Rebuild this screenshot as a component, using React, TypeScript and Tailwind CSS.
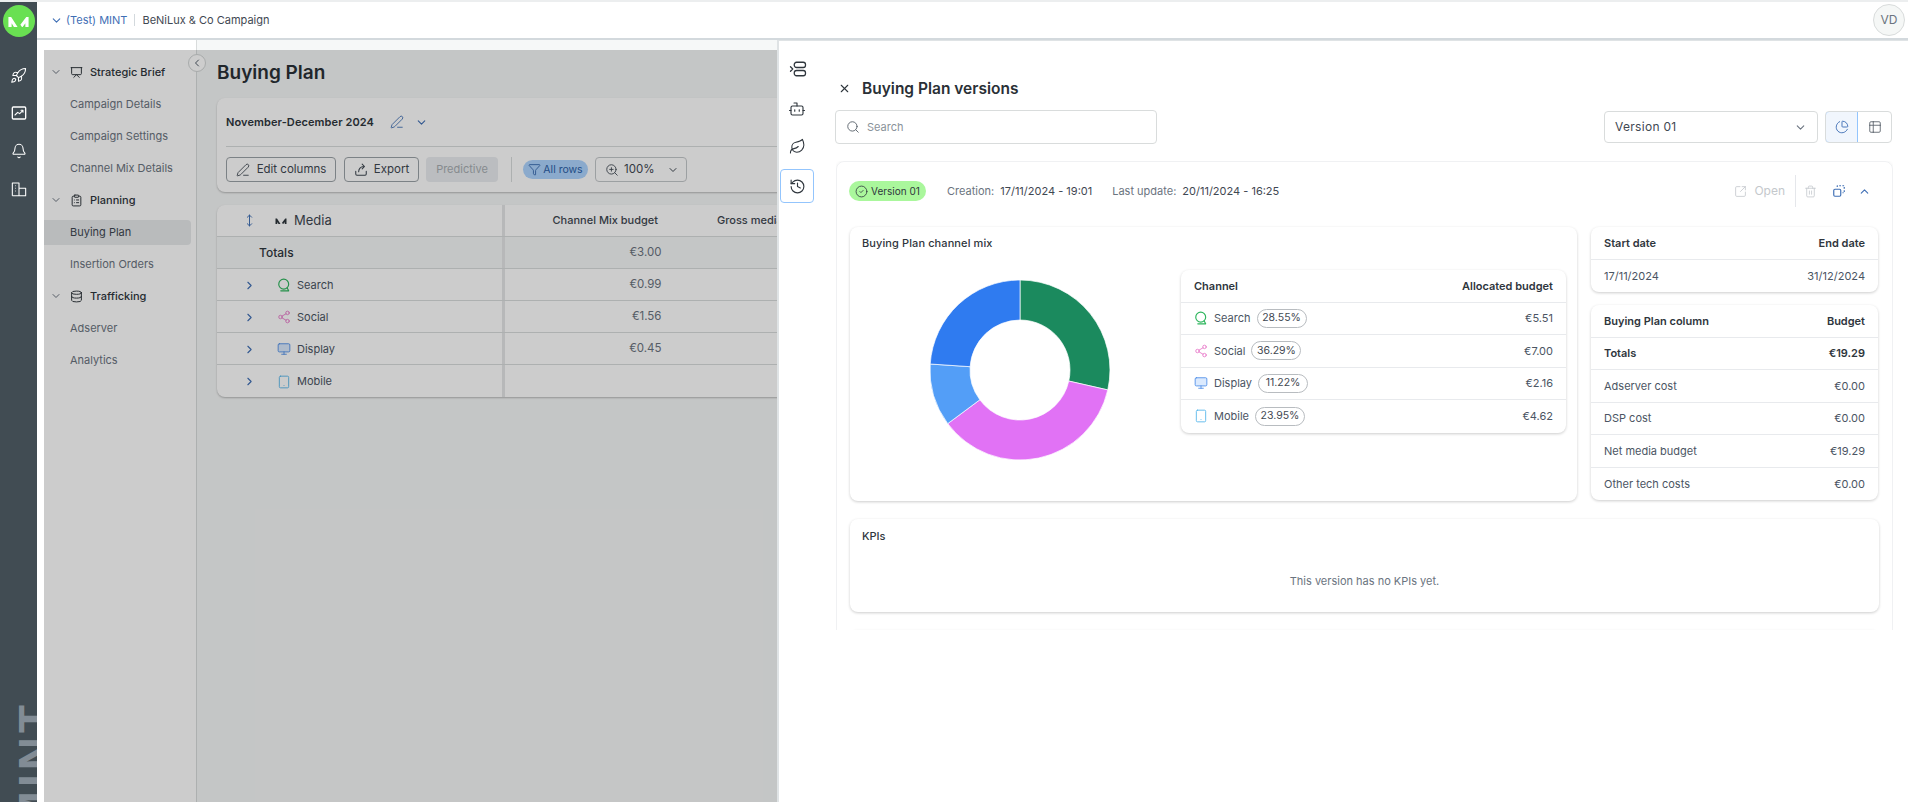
import React from 'react';
import {
  Rocket, Bell, ChevronDown, ChevronLeft, ChevronRight, ChevronUp, Presentation, ClipboardList,
  Database, Share2, Monitor, Tablet, Funnel, ZoomIn, PenLine, Bot, Leaf, History, X, Search, CircleCheck,
  PieChart, Table2, SquareArrowOutUpRight, Trash2, MoveVertical,
} from 'lucide-react';

const MLogo = ({ className }: { className: string }) => (
  <svg viewBox="0 0 24 12" className={className} fill="currentColor">
    <path d="M1 12V1h3l7 11H7L4.5 8v4zM23 12V1h-2.5L14 9.5l1.8 2.5h.7l3-4v4z" />
  </svg>
);

const SearchTail = ({ className }: { className: string }) => (
  <svg viewBox="0 0 24 24" className={className} fill="none" stroke="currentColor" strokeWidth="2" strokeLinecap="round">
    <circle cx="11.5" cy="10.5" r="8.5" />
    <path d="M17.5 17 20 22M6.5 22H20" />
  </svg>
);

const StatsBox = ({ className }: { className: string }) => (
  <svg viewBox="0 0 24 24" className={className} fill="none" stroke="currentColor" strokeWidth="2" strokeLinejoin="round" strokeLinecap="round">
    <rect x="2" y="3" width="20" height="18" rx="1.5" />
    <path d="m6 15 4-4 3 2 5-5M15 8h3v3" strokeWidth="1.6" />
  </svg>
);

const Buildings = ({ className }: { className: string }) => (
  <svg viewBox="0 0 24 24" className={className} fill="none" stroke="currentColor" strokeWidth="1.6" strokeLinejoin="round">
    <path d="M2 22V3h10v19M12 11h10v11H2" />
    <path d="M6 7h1M6 11h1M6 15h1" />
  </svg>
);

const ExportIcon = ({ className }: { className: string }) => (
  <svg viewBox="0 0 24 24" className={className} fill="none" stroke="currentColor" strokeWidth="1.8" strokeLinecap="round" strokeLinejoin="round">
    <path d="M3 14v5a2 2 0 0 0 2 2h14a2 2 0 0 0 2-2v-5" />
    <path d="M8 15c0-5 3-9 9-9M14 2l4 4-4 4" />
  </svg>
);

const RowsIcon = ({ className }: { className: string }) => (
  <svg viewBox="0 0 24 24" className={className} fill="none" stroke="currentColor" strokeWidth="1.7" strokeLinecap="round" strokeLinejoin="round">
    <rect x="7" y="3" width="15" height="7" rx="3" />
    <rect x="7" y="14" width="15" height="7" rx="3" />
    <path d="m2 9 3 3-3 3" />
  </svg>
);

const CopyDashed = ({ className }: { className: string }) => (
  <svg viewBox="0 0 24 24" className={className} fill="none" stroke="currentColor" strokeWidth="2" strokeLinejoin="round">
    <rect x="3" y="9" width="12" height="12" rx="2" />
    <path d="M9 5V3h12v12h-3" strokeDasharray="3 2.4" />
  </svg>
);

const channelIcons: Record<string, React.ReactNode> = {
  Search: <SearchTail className="w-[14px] h-[14px] text-[#2fb65e]" />,
  Social: <Share2 className="w-[14px] h-[14px] text-[#e879c9]" strokeWidth={1.5} />,
  Display: <Monitor className="w-[14px] h-[14px] text-[#4f8fe8] fill-[#dbeafe]" strokeWidth={1.5} />,
  Mobile: <Tablet className="w-[14px] h-[14px] text-[#55b6ea]" strokeWidth={1.5} />,
};

const mediaRows = [
  { name: 'Search', budget: '€0.99' },
  { name: 'Social', budget: '€1.56' },
  { name: 'Display', budget: '€0.45' },
  { name: 'Mobile', budget: '' },
];

const mix = [
  { name: 'Search', pct: 28.55, amount: '€5.51', color: '#1b8a5e' },
  { name: 'Social', pct: 36.29, amount: '€7.00', color: '#e172f5' },
  { name: 'Display', pct: 11.22, amount: '€2.16', color: '#539ef7' },
  { name: 'Mobile', pct: 23.95, amount: '€4.62', color: '#2f7bf0' },
];

const columns = [
  { name: 'Adserver cost', value: '€0.00' },
  { name: 'DSP cost', value: '€0.00' },
  { name: 'Net media budget', value: '€19.29' },
  { name: 'Other tech costs', value: '€0.00' },
];

const arc = (start: number, end: number) => {
  const pt = (r: number, p: number) => {
    const a = (p / 100) * 2 * Math.PI;
    return `${100 + r * Math.sin(a)} ${100 - r * Math.cos(a)}`;
  };
  const large = end - start > 50 ? 1 : 0;
  return `M${pt(90, start)}A90 90 0 ${large} 1 ${pt(90, end)}L${pt(50, end)}A50 50 0 ${large} 0 ${pt(50, start)}Z`;
};

const Donut = () => {
  let acc = 0;
  return (
    <svg viewBox="0 0 200 200" className="w-[200px] h-[200px]">
      {mix.map((m) => {
        const d = arc(acc, acc + m.pct);
        acc += m.pct;
        return <path key={m.name} d={d} fill={m.color} stroke="#ffffff" strokeWidth="0.7" />;
      })}
    </svg>
  );
};

const SubItem = ({ label, active }: { label: string; active?: boolean }) => (
  <div className="h-[32px] flex items-center">
    <div className={`w-full h-[25px] pl-[26px] flex items-center text-[11px] rounded-r ${active ? 'bg-[#e8eaec] text-[#3f4852]' : 'text-[#6b7480]'}`}>
      {label}
    </div>
  </div>
);

const Section = ({ icon, label }: { icon: React.ReactNode; label: string }) => (
  <div className="h-[32px] flex items-center text-[11px] font-medium text-[#2f363d]">
    <ChevronDown className="w-[12px] h-[12px] ml-[6px] mr-[7px] text-[#6b7480]" />
    <span className="w-[14px] flex justify-center">{icon}</span>
    <span className="ml-[7px]">{label}</span>
  </div>
);

const Cell = ({ left, right, bold, header }: { left: React.ReactNode; right: React.ReactNode; bold?: boolean; header?: boolean }) => (
  <div className={`h-[32.5px] px-[13px] flex items-center justify-between text-[11px] border-b border-[#e8eaed] last:border-b-0 ${bold || header ? 'font-semibold text-[#2f363d]' : 'text-[#4b5563]'}`}>
    <div className="flex items-center">{left}</div>
    <div>{right}</div>
  </div>
);

export default function App() {
  return (
    <div className="w-[1908px] h-[802px] overflow-hidden flex pt-[2px] bg-[#eceeef] font-['Inter',sans-serif]">
      {/* left rail */}
      <div className="w-[37px] shrink-0 bg-[#414c53] text-white flex flex-col items-center overflow-hidden pt-[3px]">
        <div className="w-[32px] h-[32px] rounded-full bg-[#69e052] flex items-center justify-center">
          <MLogo className="w-[23px] h-[11px] text-white" />
        </div>
        <Rocket className="w-[17px] h-[17px] mt-[30px]" strokeWidth={1.5} />
        <StatsBox className="w-[16px] h-[16px] mt-[21px]" />
        <Bell className="w-[16px] h-[16px] mt-[22px]" strokeWidth={1.6} />
        <Buildings className="w-[16px] h-[16px] mt-[22px]" />
        <div className="mt-auto -mb-[27px] self-start ml-[12px] [writing-mode:vertical-rl] rotate-180 text-[46px] leading-[46px] font-extrabold text-[#828c95] tracking-[4px] font-['Liberation_Sans',sans-serif]">
          MINT
        </div>
      </div>

      <div className="flex-1 flex flex-col bg-white min-w-0">
        {/* header */}
        <div className="h-[38px] shrink-0 border-b-2 border-[#d3d9dd] rounded-tl flex items-center pl-[13px] pr-[3px] text-[11px]">
          <ChevronDown className="w-[13px] h-[13px] text-[#3f6fb5] mr-[3px]" />
          <span className="text-[#3f6fb5]">(Test) MINT</span>
          <span className="w-px h-[12px] bg-[#d3d9dd] mx-[7px]" />
          <span className="text-[#3f4852]">BeNiLux &amp; Co Campaign</span>
          <div className="ml-auto w-[32px] h-[32px] rounded-full border border-[#d9dcdc] bg-[#f5f7f6] flex items-center justify-center text-[12px] text-[#6b7480]">
            VD
          </div>
        </div>

        <div className="relative flex-1 flex min-h-0">
          {/* sidebar */}
          <div className="w-[160px] shrink-0 border-r border-[#d9dcdc] pt-[16px] pl-[7px] pr-[5px] bg-white">
            <Section icon={<Presentation className="w-[13px] h-[13px]" strokeWidth={1.8} />} label="Strategic Brief" />
            <SubItem label="Campaign Details" />
            <SubItem label="Campaign Settings" />
            <SubItem label="Channel Mix Details" />
            <Section icon={<ClipboardList className="w-[13px] h-[13px]" strokeWidth={1.8} />} label="Planning" />
            <SubItem label="Buying Plan" active />
            <SubItem label="Insertion Orders" />
            <Section icon={<Database className="w-[13px] h-[13px]" strokeWidth={1.8} />} label="Trafficking" />
            <SubItem label="Adserver" />
            <SubItem label="Analytics" />
          </div>

          {/* main */}
          <div className="flex-1 min-w-0 bg-[#f6f8f8] pl-[20px] pt-[21px] overflow-hidden">
            <h1 className="text-[19px] leading-[24px] font-semibold text-[#2a3036]">Buying Plan</h1>
            <div className="w-[1200px] mt-[13px] h-[94px] bg-white rounded-lg shadow-[0_1px_2px_rgba(0,0,0,0.25)] pl-[9px]">
              <div className="h-[49px] flex items-center border-b border-[#d9dcdc] text-[11px] tracking-[0.1px] font-semibold text-[#2f363d]">
                November-December 2024
                <PenLine className="w-[14px] h-[14px] text-[#3f6fb5] ml-[16px]" strokeWidth={1.5} />
                <ChevronDown className="w-[13px] h-[13px] text-[#3f6fb5] ml-[11px]" />
              </div>
              <div className="flex items-center mt-[10px] text-[11.5px] text-[#3f4852]">
                <button className="w-[110px] h-[25px] border border-[#9ca3a8] rounded flex items-center justify-center gap-[7px]">
                  <PenLine className="w-[14px] h-[14px]" strokeWidth={1.5} /> Edit columns
                </button>
                <button className="ml-[8px] w-[75px] h-[25px] border border-[#9ca3a8] rounded flex items-center justify-center gap-[6px]">
                  <ExportIcon className="w-[14px] h-[14px]" /> Export
                </button>
                <button className="ml-[7px] w-[72px] h-[25px] bg-[#eaedf0] rounded text-[11px] text-[#a8adb3]">Predictive</button>
                <span className="w-px h-[25px] bg-[#d9dcdc] ml-[13px]" />
                <span className="ml-[11px] w-[65px] h-[19px] rounded-full bg-[#aed5ff] text-[#2c5fa8] text-[10.5px] flex items-center justify-center gap-[2px]">
                  <Funnel className="w-[13px] h-[13px]" strokeWidth={1.5} /> All rows
                </span>
                <div className="ml-[7px] w-[92px] h-[25px] border border-[#c4c8cb] rounded flex items-center pl-[9px]">
                  <ZoomIn className="w-[14px] h-[14px]" strokeWidth={1.5} />
                  <span className="ml-[5px]">100%</span>
                  <ChevronDown className="w-[12px] h-[12px] ml-[13px]" />
                </div>
              </div>
            </div>

            <div className="w-[1200px] mt-[13px] bg-white rounded-lg shadow-[0_1px_2px_rgba(0,0,0,0.25)] text-[11px]">
              <div className="h-[32px] flex items-center border-b border-[#d9dcdc]">
                <div className="w-[288px] h-full flex items-center border-r-[3px] border-[#e5e7e8] pl-[26px]">
                  <MoveVertical className="w-[13px] h-[13px] text-[#3f6fb5]" strokeWidth={1.8} />
                  <MLogo className="w-[12px] h-[6px] text-[#2f363d] ml-[19px]" />
                  <span className="ml-[7px] text-[13px] text-[#3f4852]">Media</span>
                </div>
                <div className="w-[153px] text-right font-medium text-[#3f4852]">Channel Mix budget</div>
                <div className="ml-[59px] font-medium text-[#3f4852]">Gross media budget</div>
              </div>
              <div className="h-[32px] flex items-center border-b border-[#d9dcdc] bg-[#f6f8f8]">
                <div className="w-[288px] h-full flex items-center border-r-[3px] border-[#e5e7e8] pl-[42px] text-[12px] font-medium text-[#2f363d]">Totals</div>
                <div className="w-[156.5px] text-right text-[11.5px] text-[#6b7480]">€3.00</div>
              </div>
              {mediaRows.map((r) => (
                <div key={r.name} className="h-[32px] flex items-center border-b border-[#d9dcdc] last:border-b-0">
                  <div className="w-[288px] h-full pt-px flex items-center border-r-[3px] border-[#e5e7e8] pl-[26px] text-[#4b5563]">
                    <ChevronRight className="w-[13px] h-[13px] text-[#3f6fb5]" />
                    <span className="ml-[21px] mr-[6px]">{channelIcons[r.name]}</span>
                    {r.name}
                  </div>
                  <div className="w-[156.5px] text-right text-[11.5px] text-[#6b7480]">{r.budget}</div>
                </div>
              ))}
            </div>
          </div>

          {/* dim layer under the drawer */}
          <div className="absolute left-[7px] top-[10px] right-0 bottom-0 bg-black/20" />

          {/* sidebar collapse button */}
          <div className="absolute left-[151px] top-[14px] w-[18px] h-[18px] rounded-full border border-[#a8abab] bg-[#cdcdcd] flex items-center justify-center">
            <ChevronLeft className="w-[12px] h-[12px] text-[#3f4852]" />
          </div>

          {/* versions drawer */}
          <div className="absolute right-0 top-0 bottom-0 w-[1131px] bg-white border-l-2 border-[#dfe3e5] border-t flex">
            <div className="w-[36px] shrink-0 flex flex-col items-center pt-[19px] text-[#2f363d]">
              <RowsIcon className="w-[18px] h-[18px] ml-[2px]" />
              <Bot className="w-[18px] h-[18px] mt-[22px]" strokeWidth={1.5} />
              <Leaf className="w-[17px] h-[17px] mt-[20px]" strokeWidth={1.5} />
              <div className="w-[34px] h-[34px] mt-[14px] rounded border border-[#93c5fd] flex items-center justify-center">
                <History className="w-[17px] h-[17px]" strokeWidth={1.6} />
              </div>
            </div>

            <div className="flex-1 min-w-0 pl-[20px] pr-[15px]">
              <div className="h-[69px] pt-[37px] flex items-start">
                <X className="w-[13px] h-[13px] text-[#2f363d] ml-[3px] mt-[4px]" />
                <h2 className="ml-[11px] text-[15.5px] leading-[22px] font-semibold text-[#2a3036]">Buying Plan versions</h2>
              </div>
              <div className="flex items-center">
                <div className="w-[322px] h-[34px] border border-[#d9dcdc] rounded flex items-center pl-[10px] text-[11px] text-[#8a929a]">
                  <Search className="w-[14px] h-[14px] text-[#5b646d]" strokeWidth={1.6} />
                  <span className="ml-[7px]">Search</span>
                </div>
                <div className="ml-auto w-[214px] h-[32px] border border-[#d9dcdc] rounded flex items-center justify-between px-[10px] text-[12px] tracking-[0.3px] text-[#3f4852]">
                  Version 01
                  <ChevronDown className="w-[13px] h-[13px] text-[#6b7480]" />
                </div>
                <div className="ml-[7px] mr-px w-[67px] h-[32px] border border-[#d9dcdc] rounded flex overflow-hidden">
                  <div className="w-[33px] -m-px mr-0 border border-[#93c5fd] rounded-l bg-[#f1f6fd] flex items-center justify-center">
                    <PieChart className="w-[14px] h-[14px] text-[#3f6fb5]" strokeWidth={1.6} />
                  </div>
                  <div className="flex-1 flex items-center justify-center">
                    <Table2 className="w-[14px] h-[14px] text-[#5b646d]" strokeWidth={1.5} />
                  </div>
                </div>
              </div>

              {/* version card, cut by the scroll area */}
              <div className="h-[469px] mt-[17px] ml-px overflow-hidden">
                <div className="border border-[#f0f1f3] rounded-lg shadow-[0_0_3px_rgba(0,0,0,0.06)] px-[13px] pb-[18px]">
                  <div className="h-[65px] pb-[7px] flex items-center text-[11px]">
                    <span className="-ml-px w-[77px] h-[20px] rounded-full bg-[#aaf79c] text-[#2f363d] text-[10px] flex items-center justify-center gap-[3px]">
                      <CircleCheck className="w-[13px] h-[13px]" strokeWidth={1.5} /> Version 01
                    </span>
                    <span className="ml-[21px] text-[#6b7480]">Creation:</span>
                    <span className="ml-[6px] text-[#3f4852]">17/11/2024 - 19:01</span>
                    <span className="ml-[20px] text-[#6b7480]">Last update:</span>
                    <span className="ml-[6px] text-[#3f4852]">20/11/2024 - 16:25</span>
                    <div className="ml-auto flex items-center mr-[8px]">
                      <SquareArrowOutUpRight className="w-[13px] h-[13px] text-[#c4c8cc]" strokeWidth={1.5} />
                      <span className="ml-[7px] text-[12px] text-[#c4c8cc]">Open</span>
                      <span className="w-px h-[32px] bg-[#e5e7eb] ml-[10px]" />
                      <Trash2 className="w-[13px] h-[13px] text-[#c4c8cc] ml-[8px]" strokeWidth={1.5} />
                      <CopyDashed className="w-[14px] h-[14px] text-[#3f6fb5] ml-[15px]" />
                      <ChevronUp className="w-[13px] h-[13px] text-[#3f6fb5] ml-[12px]" />
                    </div>
                  </div>

                  <div className="flex gap-[14px]">
                    <div className="w-[727px] h-[274px] rounded-lg shadow-[0_1px_3px_rgba(0,0,0,0.2)] relative">
                      <div className="absolute left-[12px] top-[9px] text-[11px] tracking-[0.1px] leading-[15px] font-medium text-[#2f363d]">Buying Plan channel mix</div>
                      <div className="flex pt-[43px]">
                        <div className="w-[331px] flex justify-center">
                          <div className="ml-[9px]"><Donut /></div>
                        </div>
                        <div className="w-[385px] h-[163px] rounded-lg shadow-[0_1px_3px_rgba(0,0,0,0.2)]">
                          <Cell header left="Channel" right="Allocated budget" />
                          {mix.map((m) => (
                            <Cell
                              key={m.name}
                              left={
                                <>
                                  {channelIcons[m.name]}
                                  <span className="ml-[6px]">{m.name}</span>
                                  <span className="ml-[6px] w-[50px] h-[19px] border border-[#b8bcc0] rounded-full text-[10.5px] text-[#3f4852] flex items-center justify-center">
                                    {m.pct.toFixed(2)}%
                                  </span>
                                </>
                              }
                              right={m.amount}
                            />
                          ))}
                        </div>
                      </div>
                    </div>

                    <div className="w-[287px] flex flex-col gap-[13px]">
                      <div className="rounded-lg shadow-[0_1px_3px_rgba(0,0,0,0.2)]">
                        <Cell header left="Start date" right="End date" />
                        <Cell left="17/11/2024" right="31/12/2024" />
                      </div>
                      <div className="rounded-lg shadow-[0_1px_3px_rgba(0,0,0,0.2)]">
                        <Cell header left="Buying Plan column" right="Budget" />
                        <Cell bold left="Totals" right="€19.29" />
                        {columns.map((c) => (
                          <Cell key={c.name} left={c.name} right={c.value} />
                        ))}
                      </div>
                    </div>
                  </div>

                  <div className="h-[93px] mt-[18px] rounded-lg shadow-[0_1px_3px_rgba(0,0,0,0.2)] px-[12px] pt-[10px]">
                    <div className="text-[11px] leading-[15px] font-medium text-[#2f363d]">KPIs</div>
                    <div className="mt-[29px] text-center text-[11px] text-[#6b7480]">This version has no KPIs yet.</div>
                  </div>
                  <div className="h-[60px] mt-[18px] rounded-lg shadow-[0_0_3px_rgba(0,0,0,0.05)]" />
                </div>
              </div>
            </div>
          </div>
        </div>
      </div>
    </div>
  );
}
